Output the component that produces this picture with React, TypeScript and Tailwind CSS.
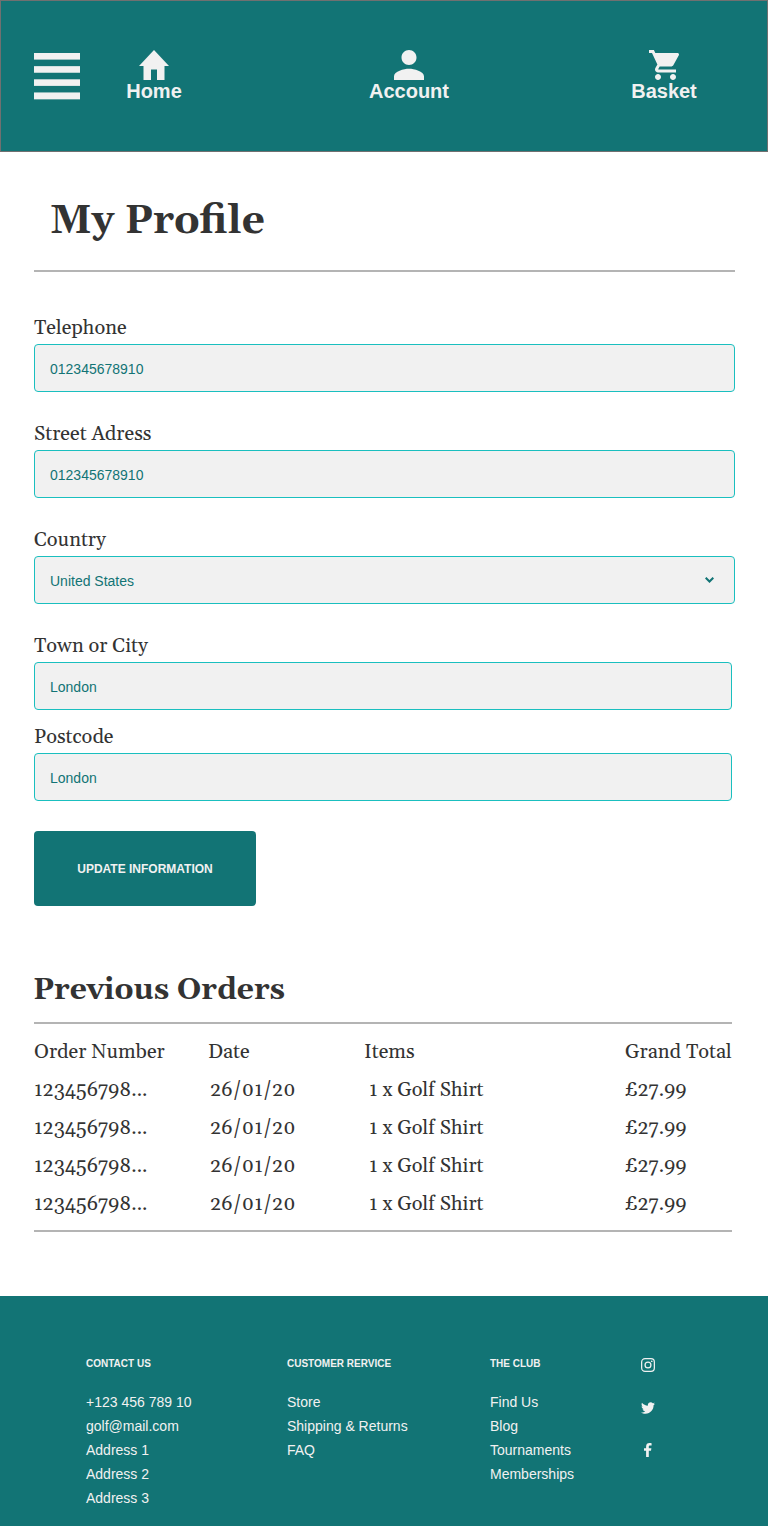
import type { ReactNode } from "react";
import { FaTwitter } from "react-icons/fa";

const orders = [1, 2, 3, 4].map((id) => ({
  id,
  number: "123456798...",
  date: "26/01/20",
  items: "1 x Golf Shirt",
  total: "£27.99",
}));

function MenuIcon() {
  return (
    <svg width="46" height="47" viewBox="0 0 46 47" fill="currentColor">
      <rect width="46" height="6.6" />
      <rect y="13.15" width="46" height="6.6" />
      <rect y="26.3" width="46" height="6.6" />
      <rect y="39.45" width="46" height="6.9" />
    </svg>
  );
}

function NavItem({ label, viewBox, path, className }: { label: string; viewBox: string; path: string; className: string }) {
  return (
    <a className={`flex flex-col items-center ${className}`}>
      <svg width="30" height="30" viewBox={viewBox} preserveAspectRatio="none" fill="currentColor">
        <path d={path} />
      </svg>
      <span className="text-[20px] leading-[22px] font-bold">{label}</span>
    </a>
  );
}

function Field({ label, value, className, select }: { label: string; value: string; className: string; select?: boolean }) {
  return (
    <div className={className}>
      <div className="h-[29px] pt-px text-[20px] leading-6">{label}</div>
      <div className="flex h-12 items-center justify-between rounded border border-[#1abfbf] bg-[#f1f1f1] pr-5 pl-[15px] font-['Liberation_Sans',sans-serif] text-sm text-[#127475]">
        <span className="pt-0.5">{value}</span>
        {select && (
          <svg width="9" height="6" viewBox="0 0 9 6" fill="none" stroke="currentColor" strokeWidth="2">
            <path d="M0.7 0.7 4.5 4.5 8.3 0.7" />
          </svg>
        )}
      </div>
    </div>
  );
}

function FooterColumn({ title, className, children }: { title: string; className: string; children: ReactNode }) {
  return (
    <div className={className}>
      <h3 className="h-[34px] text-[10px] leading-[15px] font-bold">{title}</h3>
      <ul className="text-sm leading-6">{children}</ul>
    </div>
  );
}

export default function App() {
  return (
    <div className="min-h-[1526px] w-[768px] bg-white font-['Liberation_Sans',sans-serif]">
      <header className="flex h-[152px] border border-[#707070] bg-[#127475] pt-[49px] pl-[33px] text-[#f1f1f1]">
        <div className="w-[92px] pt-[3px]">
          <MenuIcon />
        </div>
        <NavItem label="Home" className="w-[56px]" viewBox="2 3 20 17" path="M10 20v-6h4v6h5v-8h3L12 3 2 12h3v8z" />
        <NavItem
          label="Account"
          className="ml-[187px] w-[80px]"
          viewBox="4 4 16 16"
          path="M12 12c2.21 0 4-1.79 4-4s-1.79-4-4-4-4 1.79-4 4 1.79 4 4 4zm0 2c-2.67 0-8 1.34-8 4v2h16v-2c0-2.66-5.33-4-8-4z"
        />
        <NavItem
          label="Basket"
          className="ml-[182px] w-[66px]"
          viewBox="1 2 20 20"
          path="M7 18c-1.1 0-1.99.9-1.99 2S5.9 22 7 22s2-.9 2-2-.9-2-2-2zM1 2v2h2l3.6 7.59-1.35 2.45c-.16.28-.25.61-.25.96 0 1.1.9 2 2 2h12v-2H7.42c-.14 0-.25-.11-.25-.25l.03-.12.9-1.63h7.45c.75 0 1.41-.41 1.75-1.03l3.58-6.49c.08-.14.12-.31.12-.48 0-.55-.45-1-1-1H5.21l-.94-2H1zm16 16c-1.1 0-1.99.9-1.99 2s.89 2 1.99 2 2-.9 2-2-.9-2-2-2z"
        />
      </header>

      <main className="px-[34px] font-[Georgia,Gelasio,serif] text-[#333333]">
        <h1 className="h-[118px] w-[701px] pt-11 pl-4 text-[40.5px] leading-[50px] font-bold">My Profile</h1>
        <div className="h-0.5 w-[701px] bg-[#b4b4b4]" />

        <form className="pt-[43px]">
          <Field label="Telephone" value="012345678910" className="w-[701px]" />
          <Field label="Street Adress" value="012345678910" className="mt-[29px] w-[701px]" />
          <Field label="Country" value="United States" className="mt-[29px] w-[701px]" select />
          <Field label="Town or City" value="London" className="mt-[29px] w-[698px]" />
          <Field label="Postcode" value="London" className="mt-[14px] w-[698px]" />
          <button
            type="button"
            className="mt-[30px] flex h-[75px] w-[222px] items-center justify-center rounded bg-[#127475] font-['Liberation_Sans',sans-serif] text-xs font-bold text-[#f1f1f1]"
          >
            UPDATE INFORMATION
          </button>
        </form>

        <section className="w-[698px]">
          <h2 className="h-[118px] border-b-2 border-[#b4b4b4] pt-[66px] text-[30px] leading-9 font-bold">
            <span className="-ml-px">Previous Orders</span>
          </h2>
          <div className="border-b-2 border-[#b4b4b4] pt-[9px] pb-[7px] text-[20px] leading-[38px]">
            <div className="grid grid-cols-[174px_156px_261px_1fr] whitespace-nowrap">
              <span>Order Number</span>
              <span>Date</span>
              <span>Items</span>
              <span>Grand Total</span>
            </div>
            {orders.map((order) => (
              <div key={order.id} className="grid grid-cols-[174px_156px_261px_1fr] whitespace-nowrap">
                <span>{order.number}</span>
                <span className="pl-0.5">{order.date}</span>
                <span className="pl-[5px]">{order.items}</span>
                <span>{order.total}</span>
              </div>
            ))}
          </div>
        </section>
      </main>

      <footer className="mt-16 flex h-[230px] bg-[#127475] pt-[60px] pl-[86px] text-[#f1f1f1]">
        <FooterColumn title="CONTACT US" className="w-[201px]">
          <li>+123 456 789 10</li>
          <li>golf@mail.com</li>
          <li>Address 1</li>
          <li>Address 2</li>
          <li>Address 3</li>
        </FooterColumn>
        <FooterColumn title="CUSTOMER RERVICE" className="w-[203px]">
          <li>Store</li>
          <li>Shipping &amp; Returns</li>
          <li>FAQ</li>
        </FooterColumn>
        <FooterColumn title="THE CLUB" className="w-[151px]">
          <li>Find Us</li>
          <li>Blog</li>
          <li>Tournaments</li>
          <li>Memberships</li>
        </FooterColumn>
        <div className="flex flex-col items-center gap-[28.5px] pt-0.5">
          <svg width="14" height="14" viewBox="0 0 14 14" fill="none" stroke="currentColor" strokeWidth="1.25">
            <rect x="0.65" y="0.65" width="12.7" height="12.7" rx="3.4" />
            <circle cx="7" cy="7" r="2.95" />
            <circle cx="10.75" cy="3.25" r="0.85" fill="currentColor" stroke="none" />
          </svg>
          <FaTwitter size={14} />
          <svg width="7.6" height="14" viewBox="0 0 7.6 14" fill="currentColor">
            <path d="M2.1 14V7.8H0V5.2h2.1V3.4C2.1 1.2 3.4 0 5.4 0c.9 0 1.7.1 2.2.15v2.3H6.2c-1.1 0-1.4.5-1.4 1.3v1.45h2.6L7 7.8H4.8V14z" />
          </svg>
        </div>
      </footer>
    </div>
  );
}
